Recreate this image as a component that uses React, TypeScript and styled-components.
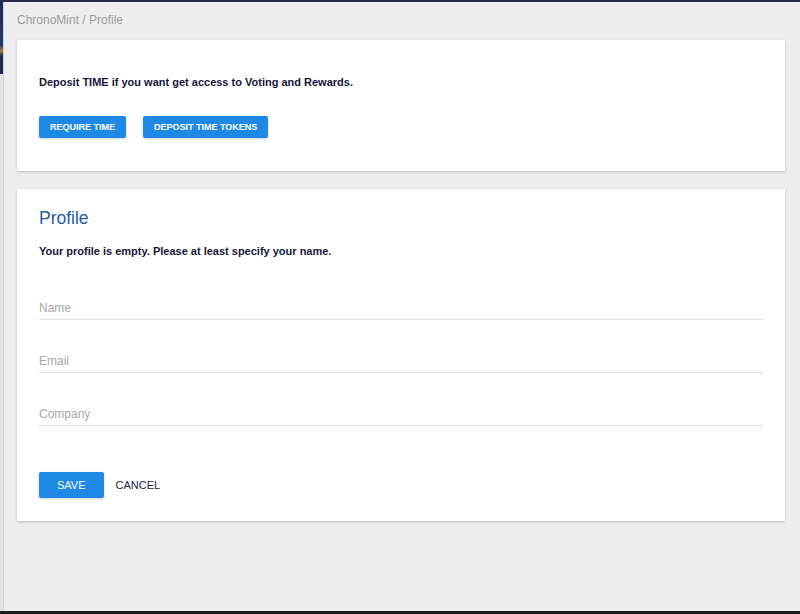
import React from 'react';
import styled, { createGlobalStyle } from 'styled-components';

const GlobalStyle = createGlobalStyle`
  html, body {
    margin: 0;
    padding: 0;
    height: 100%;
  }
  body {
    font-family: 'Liberation Sans', Arial, sans-serif;
    background: #eeeeee;
  }
  #root {
    height: 100%;
  }
`;

const Page = styled.div`
  display: flex;
  flex-direction: column;
  width: 800px;
  height: 614px;
  overflow: hidden;
  background: #eeeeee;
`;

const TopBar = styled.div`
  height: 2px;
  flex-shrink: 0;
  background: #2b2b4d;
`;

const BottomBar = styled.div`
  height: 3px;
  flex-shrink: 0;
  background: #1f1c24;
`;

const Body = styled.div`
  flex: 1;
  display: flex;
  min-height: 0;
`;

const Sidebar = styled.div`
  width: 3px;
  flex-shrink: 0;
  display: flex;
  flex-direction: column;
  border-right: 1px solid #d2d2d2;
`;

const SidebarTop = styled.div`
  height: 72px;
  background: linear-gradient(180deg, #1c2a56 0%, #243a6a 60%, #b07a3a 68%, #1c2a56 75%);
`;

const SidebarRest = styled.div`
  flex: 1;
  background: #e4e4e4;
`;

const Main = styled.main`
  flex: 1;
  padding: 10px 15px 0 13px;
  display: flex;
  flex-direction: column;
`;

const Breadcrumb = styled.div`
  font-size: 12px;
  line-height: 16px;
  color: #9a9a9a;
  margin-bottom: 12px;
`;

const Card = styled.section<{ $top: number; $bottom: number }>`
  background: #ffffff;
  padding: ${p => p.$top}px 22px ${p => p.$bottom}px;
  box-shadow: 0 1px 3px rgba(0, 0, 0, 0.14), 0 1px 2px rgba(0, 0, 0, 0.08);
  margin-bottom: 18px;
`;

const Note = styled.p`
  margin: 0;
  font-size: 11px;
  line-height: 14px;
  font-weight: bold;
  color: #161639;
`;

const ButtonRow = styled.div`
  display: flex;
  gap: 17px;
  margin-top: 27px;
`;

const RaisedButton = styled.button<{ $small?: boolean }>`
  height: ${p => (p.$small ? 22 : 26)}px;
  padding: 0 ${p => (p.$small ? 11 : 18)}px;
  border: none;
  border-radius: 2px;
  background: #1e88e5;
  color: #ffffff;
  font-family: inherit;
  font-size: ${p => (p.$small ? 9 : 11)}px;
  font-weight: ${p => (p.$small ? 'bold' : 'normal')};
  text-transform: uppercase;
  box-shadow: 0 1px 3px rgba(0, 0, 0, 0.2);
  cursor: pointer;
`;

const FlatButton = styled.button`
  height: 26px;
  padding: 0 12px;
  border: none;
  background: transparent;
  color: #1d1d3f;
  font-family: inherit;
  font-size: 11px;
  text-transform: uppercase;
  cursor: pointer;
`;

const Title = styled.h2`
  margin: 0 0 16px;
  font-size: 17.5px;
  line-height: 20px;
  font-weight: normal;
  color: #1f5ca6;
`;

const Fields = styled.div`
  margin-top: 9px;
  display: flex;
  flex-direction: column;
`;

const Field = styled.label`
  display: flex;
  align-items: flex-end;
  height: 53px;
  border-bottom: 1px solid #e0e0e0;
  box-sizing: border-box;
`;

const Input = styled.input`
  width: 100%;
  border: none;
  outline: none;
  padding: 0 0 3px;
  font-family: inherit;
  font-size: 12px;
  line-height: 16px;
  color: #333;
  background: transparent;
  &::placeholder {
    color: #a8a8a8;
  }
`;

const Actions = styled.div`
  display: flex;
  margin-top: 46px;
`;

export default function App() {
  return (
    <Page>
      <GlobalStyle />
      <TopBar />
      <Body>
        <Sidebar>
          <SidebarTop />
          <SidebarRest />
        </Sidebar>
        <Main>
          <Breadcrumb>ChronoMint / Profile</Breadcrumb>
          <Card $top={35} $bottom={33}>
            <Note>Deposit TIME if you want get access to Voting and Rewards.</Note>
            <ButtonRow>
              <RaisedButton $small>Require Time</RaisedButton>
              <RaisedButton $small>Deposit Time Tokens</RaisedButton>
            </ButtonRow>
          </Card>
          <Card $top={19} $bottom={23}>
            <Title>Profile</Title>
            <Note>Your profile is empty. Please at least specify your name.</Note>
            <Fields>
              <Field>
                <Input placeholder="Name" />
              </Field>
              <Field>
                <Input placeholder="Email" />
              </Field>
              <Field>
                <Input placeholder="Company" />
              </Field>
            </Fields>
            <Actions>
              <RaisedButton>Save</RaisedButton>
              <FlatButton>Cancel</FlatButton>
            </Actions>
          </Card>
        </Main>
      </Body>
      <BottomBar />
    </Page>
  );
}
